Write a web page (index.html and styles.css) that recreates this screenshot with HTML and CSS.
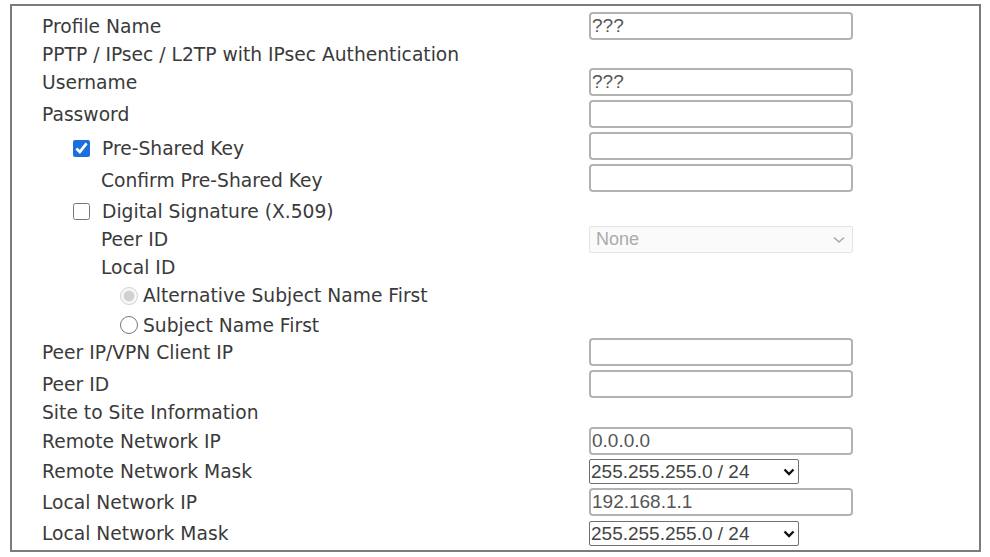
FILE: index.html
```html
<!DOCTYPE html>
<html>
<head>
<meta charset="utf-8">
<link rel="stylesheet" href="styles.css">
</head>
<body>
<div class="panel">
  <div class="row h32">
    <div class="lab">Profile Name</div>
    <div class="ctl"><input class="txt" type="text" value="???"></div>
  </div>
  <div class="row h24">
    <div class="lab">PPTP / IPsec / L2TP with IPsec Authentication</div>
    <div class="ctl"></div>
  </div>
  <div class="row h32">
    <div class="lab">Username</div>
    <div class="ctl"><input class="txt" type="text" value="???"></div>
  </div>
  <div class="row h32">
    <div class="lab">Password</div>
    <div class="ctl"><input class="txt" type="password" value=""></div>
  </div>
  <div class="row h32">
    <div class="lab lab-check shift"><input class="chk" type="checkbox" checked><span>Pre-Shared Key</span></div>
    <div class="ctl"><input class="txt" type="password" value=""></div>
  </div>
  <div class="row h32">
    <div class="lab lab-ind shift">Confirm Pre-Shared Key</div>
    <div class="ctl"><input class="txt" type="password" value=""></div>
  </div>
  <div class="row h31">
    <div class="lab lab-check shift"><input class="chk" type="checkbox"><span>Digital Signature (X.509)</span></div>
    <div class="ctl"></div>
  </div>
  <div class="row h28">
    <div class="lab lab-ind">Peer ID</div>
    <div class="ctl">
      <div class="sel-wrap">
        <select class="sel-dis" disabled><option>None</option></select>
        <svg class="chev-dis" width="12" height="8" viewBox="0 0 12 8"><path d="M1 1.5 L6 6 L11 1.5" fill="none" stroke="#a8a8a8" stroke-width="1.6"/></svg>
      </div>
    </div>
  </div>
  <div class="row h28">
    <div class="lab lab-ind">Local ID</div>
    <div class="ctl"></div>
  </div>
  <div class="row h29">
    <div class="lab lab-radio"><input class="rad" type="radio" name="lid" checked disabled><span>Alternative Subject Name First</span></div>
    <div class="ctl"></div>
  </div>
  <div class="row h26">
    <div class="lab lab-radio shift"><input class="rad" type="radio" name="lid2"><span>Subject Name First</span></div>
    <div class="ctl"></div>
  </div>
  <div class="row h32">
    <div class="lab">Peer IP/VPN Client IP</div>
    <div class="ctl"><input class="txt" type="text" value=""></div>
  </div>
  <div class="row h32">
    <div class="lab">Peer ID</div>
    <div class="ctl"><input class="txt" type="text" value=""></div>
  </div>
  <div class="row h25">
    <div class="lab">Site to Site Information</div>
    <div class="ctl"></div>
  </div>
  <div class="row h32">
    <div class="lab">Remote Network IP</div>
    <div class="ctl"><input class="txt" type="text" value="0.0.0.0"></div>
  </div>
  <div class="row h29">
    <div class="lab">Remote Network Mask</div>
    <div class="ctl">
      <div class="sel-wrap">
        <select class="sel"><option>255.255.255.0 / 24</option></select>
        <svg class="chev" width="12" height="8" viewBox="0 0 12 8"><path d="M1.5 1.5 L6 6 L10.5 1.5" fill="none" stroke="#111" stroke-width="2.4"/></svg>
      </div>
    </div>
  </div>
  <div class="row h32">
    <div class="lab">Local Network IP</div>
    <div class="ctl"><input class="txt" type="text" value="192.168.1.1"></div>
  </div>
  <div class="row h31">
    <div class="lab">Local Network Mask</div>
    <div class="ctl">
      <div class="sel-wrap">
        <select class="sel"><option>255.255.255.0 / 24</option></select>
        <svg class="chev" width="12" height="8" viewBox="0 0 12 8"><path d="M1.5 1.5 L6 6 L10.5 1.5" fill="none" stroke="#111" stroke-width="2.4"/></svg>
      </div>
    </div>
  </div>
</div>
</body>
</html>
```

FILE: styles.css
```css
html, body {
  margin: 0;
  padding: 0;
  background: #ffffff;
}

.panel {
  margin: 4px 0 0 10px;
  width: 971px;
  height: 548px;
  box-sizing: border-box;
  border: 2px solid #7b7b7b;
  padding: 4px 0 0 30px;
  font-family: "DejaVu Sans", Verdana, sans-serif;
  font-size: 18.7px;
  color: #3a3a3a;
}

.row {
  display: grid;
  grid-template-columns: 547px 1fr;
  align-items: center;
}

.h24 { height: 24px; }
.h25 { height: 25px; }
.h26 { height: 26px; }
.h28 { height: 28px; }
.h29 { height: 29px; }
.h31 { height: 31px; }
.h32 { height: 32px; }

.lab {
  white-space: nowrap;
  line-height: 21px;
}

.shift {
  position: relative;
  top: 2px;
}

.lab-check {
  display: flex;
  align-items: center;
  padding-left: 31px;
}

.lab-ind {
  padding-left: 59px;
}

.lab-radio {
  display: flex;
  align-items: center;
  padding-left: 78px;
}

.chk {
  width: 17px;
  height: 17px;
  margin: 0 12px 0 0;
  accent-color: #1a6fdc;
}

.rad {
  width: 18px;
  height: 18px;
  margin: 0 5px 0 0;
}

.ctl {
  display: flex;
  align-items: center;
}

.txt {
  width: 264px;
  height: 28px;
  box-sizing: border-box;
  border: 2px solid #b3b3b3;
  border-radius: 4px;
  padding: 0 1px;
  margin: 0;
  font-family: "Liberation Sans", Arial, sans-serif;
  font-size: 19px;
  color: #555555;
  background: #ffffff;
  outline: none;
}

.sel-wrap {
  position: relative;
  display: inline-block;
}

.sel {
  -webkit-appearance: none;
  appearance: none;
  width: 210px;
  height: 25px;
  box-sizing: border-box;
  border: 1px solid #6f6f6f;
  border-radius: 2px;
  padding: 0 0 0 1px;
  margin: 0;
  font-family: "Liberation Sans", Arial, sans-serif;
  font-size: 19px;
  color: #444444;
  background: #ffffff;
  display: block;
}

.chev {
  position: absolute;
  right: 4px;
  top: 9px;
  pointer-events: none;
}

.sel-dis {
  -webkit-appearance: none;
  appearance: none;
  width: 264px;
  height: 27px;
  box-sizing: border-box;
  border: 1px solid #e4e4e4;
  border-radius: 2px;
  padding: 0 0 0 6px;
  margin: 0;
  font-family: "Liberation Sans", Arial, sans-serif;
  font-size: 18px;
  color: #ababab;
  background: #fafafa;
  opacity: 1;
  display: block;
}

.chev-dis {
  position: absolute;
  right: 8px;
  top: 10px;
  pointer-events: none;
}
```
